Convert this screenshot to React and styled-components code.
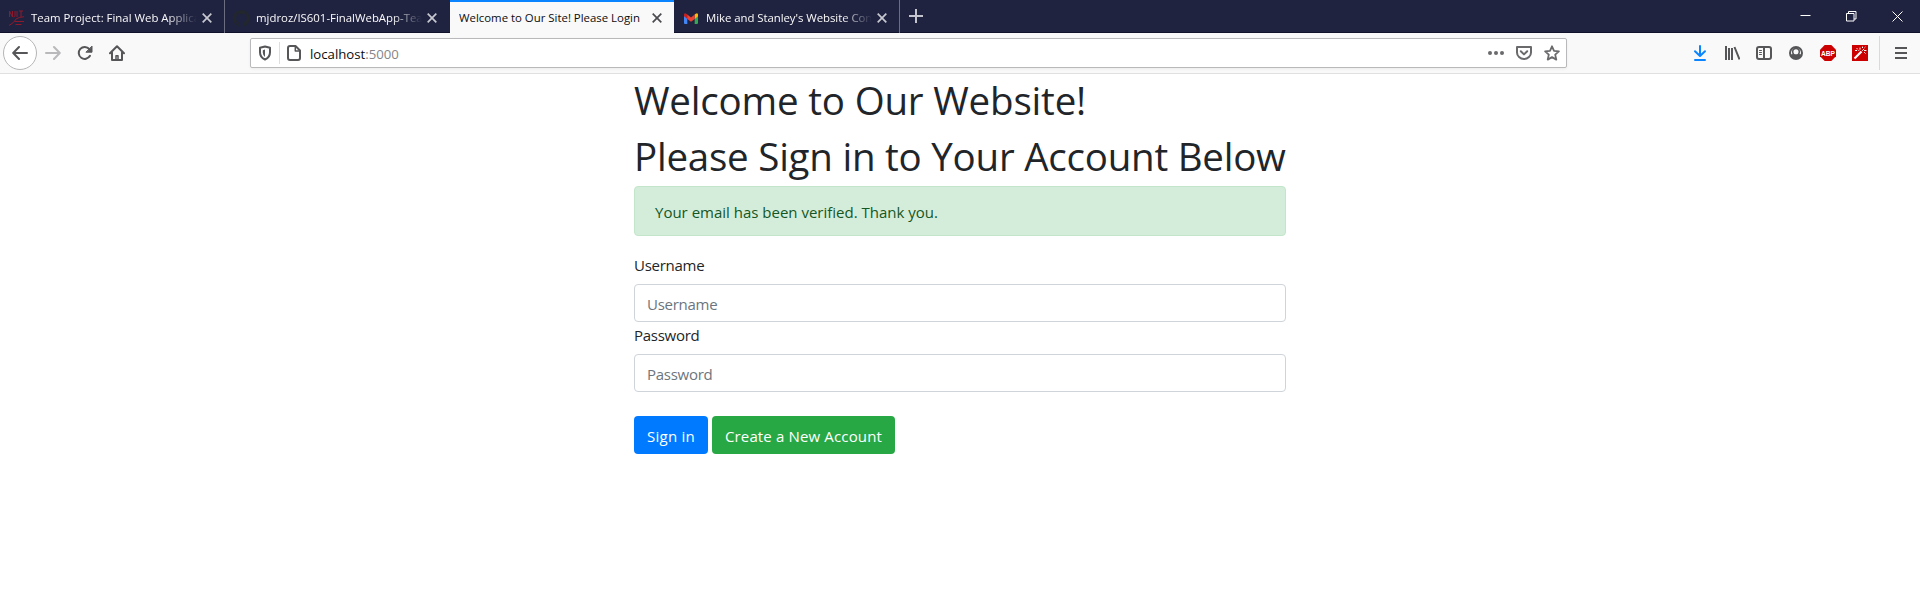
import React from "react";
import styled, { createGlobalStyle, css } from "styled-components";

const GlobalStyle = createGlobalStyle`
  *, *::before, *::after { box-sizing: border-box; }
  body {
    margin: 0;
    background: #fff;
    color: #212529;
    font-family: "Segoe UI", "Open Sans", "Noto Sans", sans-serif;
    font-size: 15px;
    line-height: 24px;
    overflow: hidden;
  }
`;

const Window = styled.div`
  display: flex;
  flex-direction: column;
  height: 594px;
  background: #fff;
`;

const TitleBar = styled.header`
  display: flex;
  height: 33px;
  background: #202340;
  box-shadow: inset 0 -1px 0 #10122b;
`;

const Tab = styled.div`
  display: flex;
  align-items: center;
  width: ${(p) => p.$width || "225px"};
  height: 33px;
  padding: 3px 10px 0 ${(p) => p.$inset || "8px"};
  color: #f9f9fa;
  border-right: 1px solid ${(p) => (p.$divider ? "#6b6d80" : "transparent")};
  ${(p) =>
    p.$active &&
    css`
      padding-top: 1px;
      color: #0c0c0d;
      background: #f9f9fa;
      border-top: 2px solid #0a84ff;
      border-right: 0;
    `}
`;

const Favicon = styled.svg`
  flex: none;
  width: 17px;
  height: 17px;
  margin-right: 6px;
`;

const TabTitle = styled.span`
  flex: 1;
  min-width: 0;
  overflow: hidden;
  white-space: nowrap;
  font-size: 11.4px;
  line-height: 18px;
  letter-spacing: ${(p) => p.$spacing || "0"};
  ${(p) =>
    p.$fade &&
    css`
      mask-image: linear-gradient(to left, transparent 0, #000 30px);
    `}
`;

const CloseIcon = styled.svg`
  flex: none;
  width: 10px;
  height: 10px;
  margin: -1px 2px 0 5px;
  stroke: ${(p) => (p.$dark ? "#4a4a4f" : "#c7c8d0")};
  stroke-width: 1.7;
`;

const NewTab = styled.div`
  display: flex;
  padding: 9px;
  svg { width: 14px; height: 14px; stroke: #c3c4cd; stroke-width: 2; }
`;

const WindowControls = styled.div`
  display: flex;
  margin-left: auto;
`;

const WindowButton = styled.div`
  display: flex;
  align-items: center;
  justify-content: center;
  width: 46px;
  height: 32px;
  svg { width: 11px; height: 11px; fill: none; stroke: #fff; }
`;

const Toolbar = styled.nav`
  display: flex;
  align-items: center;
  height: 41px;
  background: #f9f9fa;
  border-bottom: 1px solid #e0e0e1;
`;

const NavButtons = styled.div`
  display: flex;
  align-items: center;
  width: 250px;
  padding-left: 3px;
`;

const BackButton = styled.div`
  display: flex;
  align-items: center;
  justify-content: center;
  width: 34px;
  height: 34px;
  border: 1px solid #b6b6b8;
  border-radius: 50%;
  background: #fff;
`;

const IconSlot = styled.div`
  display: flex;
  align-items: center;
  justify-content: center;
  width: 32px;
  height: 32px;
`;

const Glyph = styled.svg`
  display: block;
  flex: none;
  width: 16px;
  height: 16px;
  fill: none;
  stroke: ${(p) => p.$color || "#565659"};
  stroke-width: 2;
  stroke-linecap: round;
  stroke-linejoin: round;
`;

const AddressBar = styled.div`
  display: flex;
  align-items: center;
  width: 1317px;
  height: 30px;
  padding: 0 6px;
  background: #fff;
  border: 1px solid #b9b9bb;
  border-radius: 2px;
  box-shadow: 0 1px 3px rgba(0, 0, 0, 0.06);
`;

const AddressDivider = styled.span`
  width: 1px;
  height: 22px;
  margin: 0 6px;
  background: #dededf;
`;

const Address = styled.span`
  flex: 1;
  margin: 2px 0 0 8px;
  font-size: 13.2px;
  line-height: 20px;
  color: #0c0c0d;
`;

const Port = styled.span`
  color: #858587;
`;

const PageActions = styled.div`
  display: flex;
  gap: 12px;
`;

const Extensions = styled.div`
  display: flex;
  align-items: center;
  margin-left: auto;
`;

const MenuArea = styled.div`
  display: flex;
  align-items: center;
  justify-content: center;
  width: 41px;
  height: 34px;
  margin-left: 3px;
  padding-left: 2px;
  border-left: 1px solid #dadadb;
`;

const Page = styled.main`
  width: 652px;
  margin: 0 auto;
`;

const Heading = styled.h1`
  margin: 0 0 8px;
  padding-top: 2px;
  height: 48px;
  font-size: 38.5px;
  font-weight: 400;
  line-height: 48px;
  letter-spacing: ${(p) => p.$spacing || "0"};
  white-space: nowrap;
`;

const Alert = styled.div`
  height: 50px;
  margin-bottom: 16px;
  padding: 13px 20px 11px;
  color: #155724;
  background: #d4edda;
  border: 1px solid #c3e6cb;
  border-radius: 4px;
`;

const Label = styled.label`
  display: block;
  height: 24px;
  margin-bottom: 8px;
  padding-top: 1px;
  letter-spacing: -0.26px;
`;

const Input = styled.input`
  display: block;
  width: 100%;
  height: 38px;
  padding: 8px 12px 6px;
  font: inherit;
  letter-spacing: -0.26px;
  color: #495057;
  background: #fff;
  border: 1px solid #ced4da;
  border-radius: 4px;
  &::placeholder { color: #6c757d; opacity: 1; }
`;

const Actions = styled.div`
  display: flex;
  gap: 4px;
  margin-top: 24px;
`;

const Button = styled.button`
  height: 38px;
  width: ${(p) => p.$width};
  padding: 2px 0 0;
  font: inherit;
  letter-spacing: ${(p) => p.$spacing};
  white-space: nowrap;
  color: #fff;
  background: ${(p) => (p.$success ? "#28a745" : "#007bff")};
  border: 0;
  border-radius: 4px;
`;

const Close = ({ dark }) => (
  <CloseIcon viewBox="0 0 10 10" $dark={dark}>
    <path d="M.7.7l8.6 8.6M9.3.7L.7 9.3" />
  </CloseIcon>
);

const SchoolIcon = () => (
  <Favicon viewBox="0 0 17 17" fill="none" stroke="#8d1a2c">
    <path strokeWidth="1" d="M1.500 7V1l3 6V1M7 1v4.500q0 1.500-1.500 1.500M9 1v6M11 1h4M13 1v6" />
    <path strokeWidth="1" d="M1 15.500Q6 13 8 9q3-2 8-2.300M6.500 11.500h9.500M7.500 14.500h6" />
  </Favicon>
);

const RepoIcon = () => (
  <Favicon viewBox="0 0 16 16" fill="#22272e">
    <path d="M8 0C3.580 0 0 3.580 0 8c0 3.540 2.290 6.530 5.470 7.590.4.070.55-.17.55-.38v-1.490c-2.230.48-2.700-1.070-2.700-1.070-.36-.92-.89-1.170-.89-1.170-.73-.5.050-.49.050-.49.8.060 1.230.83 1.230.83.72 1.220 1.870.87 2.330.66.070-.52.28-.87.51-1.070-1.780-.2-3.640-.89-3.640-3.950 0-.87.310-1.590.82-2.150-.08-.2-.36-1.020.08-2.120 0 0 .67-.21 2.200.82a7.600 7.600 0 0 1 4 0c1.530-1.040 2.200-.82 2.200-.82.44 1.100.16 1.920.08 2.120.51.56.82 1.270.82 2.150 0 3.070-1.870 3.750-3.650 3.950.29.25.54.73.54 1.480v2.200c0 .21.150.46.55.38A8 8 0 0 0 8 0z" />
  </Favicon>
);

const MailIcon = () => (
  <Favicon viewBox="0 0 17 17">
    <path fill="#4285f4" d="M1 4.500l3.300 2.500v7H2q-1 0-1-1z" />
    <path fill="#34a853" d="M15 4.500L11.700 7v7H14q1 0 1-1z" />
    <path fill="#fbbc04" d="M11.700 4.500l1-.8Q15 2.500 15 4.800v1.400L11.700 9z" />
    <path fill="#c5221f" d="M4.300 4.500l-1-.8Q1 2.500 1 4.800v1.400L4.300 9z" />
    <path fill="#ea4335" d="M4.300 4.500L8 7.400l3.700-2.900V9L8 11.800 4.300 9z" />
  </Favicon>
);

export default function App() {
  return (
    <>
      <GlobalStyle />
      <Window>
        <TitleBar>
          <Tab $divider>
            <SchoolIcon />
            <TabTitle $fade>Team Project: Final Web Applicat</TabTitle>
            <Close />
          </Tab>
          <Tab>
            <RepoIcon />
            <TabTitle $fade>mjdroz/IS601-FinalWebApp-Tea</TabTitle>
            <Close />
          </Tab>
          <Tab $active $width="224px" $inset="9px">
            <TabTitle>Welcome to Our Site! Please Login</TabTitle>
            <Close dark />
          </Tab>
          <Tab $divider $width="226px" $inset="9px">
            <MailIcon />
            <TabTitle $fade $spacing="-0.05px">Mike and Stanley's Website Con</TabTitle>
            <Close />
          </Tab>
          <NewTab>
            <svg viewBox="0 0 14 14"><path d="M7 0v14M0 7h14" /></svg>
          </NewTab>
          <WindowControls>
            <WindowButton>
              <svg viewBox="0 0 11 11"><path d="M.5 4.500h10" /></svg>
            </WindowButton>
            <WindowButton>
              <svg viewBox="0 0 11 11"><path d="M.5 2.500h7.500v7.500H.5zM2.500 2.500V.5h7.500v7.500H8" /></svg>
            </WindowButton>
            <WindowButton>
              <svg viewBox="0 0 11 11"><path d="M.5.500l10 10M10.500.500l-10 10" /></svg>
            </WindowButton>
          </WindowControls>
        </TitleBar>

        <Toolbar>
          <NavButtons>
            <BackButton>
              <Glyph viewBox="0 0 16 16"><path d="M15 8H1.500M7 2L1.200 8 7 14" /></Glyph>
            </BackButton>
            <IconSlot>
              <Glyph viewBox="0 0 16 16" $color="#b9b9bb"><path d="M1 8h13.500M9 2l5.800 6L9 14" /></Glyph>
            </IconSlot>
            <IconSlot>
              <Glyph viewBox="0 0 16 16">
                <path d="M13 10.800A6 6 0 1 1 12.300 4" />
                <path fill="#565659" strokeWidth="1" d="M15 1.500v5.700H9.300z" />
              </Glyph>
            </IconSlot>
            <IconSlot>
              <Glyph viewBox="0 0 16 16">
                <path d="M1 8.300L8 1.300l7 7M3 7.500V15h10V7.500" />
                <path strokeWidth="1.500" d="M7 15v-4.300h2V15" />
              </Glyph>
            </IconSlot>
          </NavButtons>

          <AddressBar>
            <Glyph viewBox="0 0 16 16">
              <path d="M8 1.500l5 1.300v4.500Q13 12.500 8 14.500 3 12.500 3 7.300V2.800z" />
              <path fill="#565659" stroke="none" d="M8 4.500L5.800 5.200v2.300Q5.900 10.500 8 12z" />
            </Glyph>
            <AddressDivider />
            <Glyph viewBox="0 0 16 16">
              <path d="M4 1h5.500L14 5.500V13q0 2-2 2H4q-2 0-2-2V3q0-2 2-2z" />
              <path strokeWidth="1.500" d="M9.300 1.500V6h4.200" />
            </Glyph>
            <Address>localhost<Port>:5000</Port></Address>
            <PageActions>
              <Glyph viewBox="0 0 16 16">
                <g fill="#6a6a6d" stroke="none">
                  <circle cx="2" cy="8" r="2" /><circle cx="8" cy="8" r="2" /><circle cx="14" cy="8" r="2" />
                </g>
              </Glyph>
              <Glyph viewBox="0 0 16 16" $color="#6a6a6d">
                <path d="M1 2h14v5.500a7 6.500 0 0 1-14 0zM4.800 6.300L8 9.400l3.200-3.100" />
              </Glyph>
              <Glyph viewBox="0 0 16 16" $color="#6a6a6d">
                <path strokeWidth="1.800" d="M8 1.300l2 4.500 4.900.5-3.700 3.300 1.100 5L8 12.100l-4.300 2.500 1.100-5L1.100 6.300 6 5.800z" />
              </Glyph>
            </PageActions>
          </AddressBar>

          <Extensions>
            <IconSlot>
              <Glyph viewBox="0 0 16 16" $color="#0a84ff"><path d="M8 1v9.500M3 6.200L8 11l5-4.800M3 15h10" /></Glyph>
            </IconSlot>
            <IconSlot>
              <Glyph viewBox="0 0 16 16"><path strokeLinecap="butt" d="M2 1v14M5 3v12M8 3v12M10.500 2l5 12.500" /></Glyph>
            </IconSlot>
            <IconSlot>
              <Glyph viewBox="0 0 16 16">
                <rect x="1" y="2" width="14" height="12" rx="2" />
                <path d="M8 2v12" /><path strokeWidth="1" d="M3.500 5.500h2M3.500 7.500h2M3.500 9.500h2" />
              </Glyph>
            </IconSlot>
            <IconSlot>
              <Glyph viewBox="0 0 16 16">
                <circle cx="8" cy="8" r="6" />
                <path fill="#565659" stroke="none" d="M2.500 9.500L5 9q3 2 6 0l2.500.5Q12 14 8 14T2.500 9.500z" />
                <circle cx="8" cy="6.700" r="3.300" fill="#f9f9fa" strokeWidth="1.500" />
              </Glyph>
            </IconSlot>
            <IconSlot>
              <Glyph viewBox="0 0 16 16">
                <path fill="#cc0000" stroke="none" d="M4.700 0h6.600L16 4.700v6.600L11.300 16H4.700L0 11.300V4.700z" />
                <text x="8" y="11" textAnchor="middle" fill="#fff" stroke="none" fontFamily="Liberation Sans, sans-serif" fontWeight="700" fontSize="8" textLength="14" lengthAdjust="spacingAndGlyphs">ABP</text>
              </Glyph>
            </IconSlot>
            <IconSlot>
              <Glyph viewBox="0 0 16 16" $color="#fff">
                <path fill="#cc0000" stroke="none" d="M0 0h16v16H0z" />
                <path strokeLinecap="butt" strokeWidth="2.200" d="M2.500 13.500l7-7" />
                <path strokeWidth="1" d="M10.500 5.500l1.300-1.300M8 3v1.300M10.500 2v.6M12.800 2.500l.3-.3M12.500 5.500H14M12.500 7.500l.8.8M5 3.500v.2M3.500 5.500h1.200M6.300 5l.5.500" />
              </Glyph>
            </IconSlot>
            <MenuArea>
              <Glyph viewBox="0 0 16 16"><path strokeLinecap="butt" d="M2 3h12M2 8h12M2 13h12" /></Glyph>
            </MenuArea>
          </Extensions>
        </Toolbar>

        <Page>
          <Heading $spacing="-0.18px">Welcome to Our Website!</Heading>
          <Heading $spacing="-0.23px">Please Sign in to Your Account Below</Heading>
          <Alert>Your email has been verified. Thank you.</Alert>
          <Label htmlFor="username">Username</Label>
          <Input id="username" placeholder="Username" />
          <Label htmlFor="password">Password</Label>
          <Input id="password" type="password" placeholder="Password" />
          <Actions>
            <Button $width="74px" $spacing="0.25px">Sign in</Button>
            <Button $width="183px" $spacing="0.15px" $success>Create a New Account</Button>
          </Actions>
        </Page>
      </Window>
    </>
  );
}
